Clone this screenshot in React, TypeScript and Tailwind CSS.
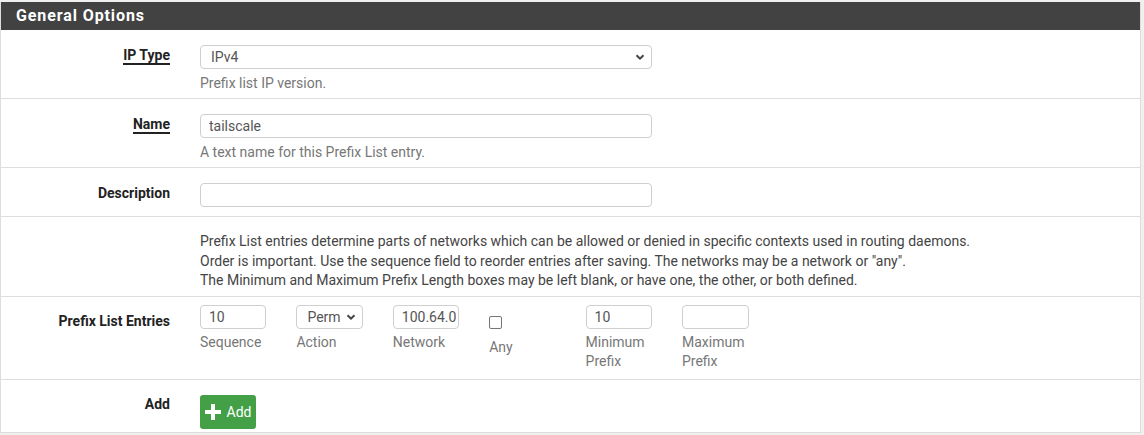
function Chevron() {
  return (
    <svg viewBox="0 0 10 10" className="w-[10px] h-[10px]">
      <path d="M1.5 3.2 L5 6.7 L8.5 3.2" fill="none" stroke="#444" strokeWidth="2" />
    </svg>
  );
}

function PlusIcon() {
  return (
    <svg viewBox="0 0 16 16" className="w-[16px] h-[16px]">
      <rect x="6" y="0" width="4" height="16" fill="#fff" />
      <rect x="0" y="6" width="16" height="4" fill="#fff" />
    </svg>
  );
}

function FakeSelect({ value, className }: { value: string; className: string }) {
  return (
    <div className={`relative h-[24px] border border-[#cfcfcf] rounded-[4px] bg-white flex items-center overflow-hidden ${className}`}>
      <span className="pl-[10px] text-[14px] text-[#555] whitespace-nowrap">{value}</span>
      <span className="absolute right-[6px] top-[6px] bg-white pl-[2px]">
        <Chevron />
      </span>
    </div>
  );
}

function TextInput({ value, className }: { value?: string; className: string }) {
  return (
    <div className={`h-[24px] border border-[#cfcfcf] rounded-[4px] bg-white flex items-center pl-[8px] pr-[2px] ${className}`}>
      <span className="block overflow-hidden text-[14px] text-[#555] whitespace-nowrap">{value}</span>
    </div>
  );
}

function Row({ label, underline, children, className }: { label: string; underline?: boolean; children: React.ReactNode; className: string }) {
  return (
    <div className={`flex border-b border-[#ddd] ${className}`}>
      <div className="w-[169px] text-right text-[14px] font-bold text-[#222] leading-[20px]">
        {label && (
          <span className={underline ? 'border-b-2 border-[#222]' : ''}>{label}</span>
        )}
      </div>
      <div className="pl-[30px] flex-1">{children}</div>
    </div>
  );
}

function EntryCol({ children, sub }: { children: React.ReactNode; sub: React.ReactNode }) {
  return (
    <div className="w-[96.4px] shrink-0">
      {children}
      <div className="mt-[4px] text-[14px] leading-[19px] text-[#777]">{sub}</div>
    </div>
  );
}

export default function App() {
  return (
    <div className="w-[1144px] h-[435px] bg-[#f0f0f0] pt-[2px] font-['Roboto',sans-serif]">
      <div className="w-[1141px] bg-white border-l border-r border-b border-[#ddd]">
        <div className="h-[28px] bg-[#424242] px-[15px] flex items-center">
          <span className="text-white font-bold text-[16px] tracking-[0.9px]">General Options</span>
        </div>

        <Row label="IP Type" underline className="h-[69px] pt-[15px]">
          <FakeSelect value="IPv4" className="w-[452px]" />
          <div className="mt-[4px] text-[14px] leading-[20px] text-[#777]">Prefix list IP version.</div>
        </Row>

        <Row label="Name" underline className="h-[69px] pt-[15px]">
          <TextInput value="tailscale" className="w-[452px]" />
          <div className="mt-[4px] text-[14px] leading-[20px] text-[#777]">A text name for this Prefix List entry.</div>
        </Row>

        <Row label="Description" className="h-[49px] pt-[15px]">
          <TextInput className="w-[452px]" />
        </Row>

        <Row label="" className="h-[80px] pt-[15px]">
          <div className="text-[14px] leading-[19.5px] text-[#444]">
            <div>Prefix List entries determine parts of networks which can be allowed or denied in specific contexts used in routing daemons.</div>
            <div>Order is important. Use the sequence field to reorder entries after saving. The networks may be a network or "any".</div>
            <div>The Minimum and Maximum Prefix Length boxes may be left blank, or have one, the other, or both defined.</div>
          </div>
        </Row>

        <Row label="Prefix List Entries" className="h-[83px] pt-[14px]">
          <div className="flex -mt-[6px]">
            <EntryCol sub="Sequence">
              <TextInput value="10" className="w-[66px]" />
            </EntryCol>
            <EntryCol sub="Action">
              <FakeSelect value="Perm" className="w-[67px]" />
            </EntryCol>
            <EntryCol sub="Network">
              <TextInput value="100.64.0.0/10" className="w-[66px]" />
            </EntryCol>
            <div className="w-[96.4px] shrink-0 pt-[11px]">
              <div className="w-[13px] h-[13px] border border-[#767676] rounded-[2px] bg-white" />
              <div className="mt-[9px] text-[14px] leading-[19px] text-[#777]">Any</div>
            </div>
            <EntryCol sub={<>Minimum<br />Prefix</>}>
              <TextInput value="10" className="w-[66px]" />
            </EntryCol>
            <EntryCol sub={<>Maximum<br />Prefix</>}>
              <TextInput className="w-[67px]" />
            </EntryCol>
          </div>
        </Row>

        <div className="flex h-[52px] pt-[14px]">
          <div className="w-[169px] text-right text-[14px] font-bold text-[#222] leading-[20px]">Add</div>
          <div className="pl-[30px]">
            <button className="h-[34px] w-[56px] mt-[1px] bg-[#43a047] rounded-[3px] flex items-center justify-center gap-[6px] text-white text-[14px]">
              <PlusIcon />
              <span>Add</span>
            </button>
          </div>
        </div>
      </div>
    </div>
  );
}
